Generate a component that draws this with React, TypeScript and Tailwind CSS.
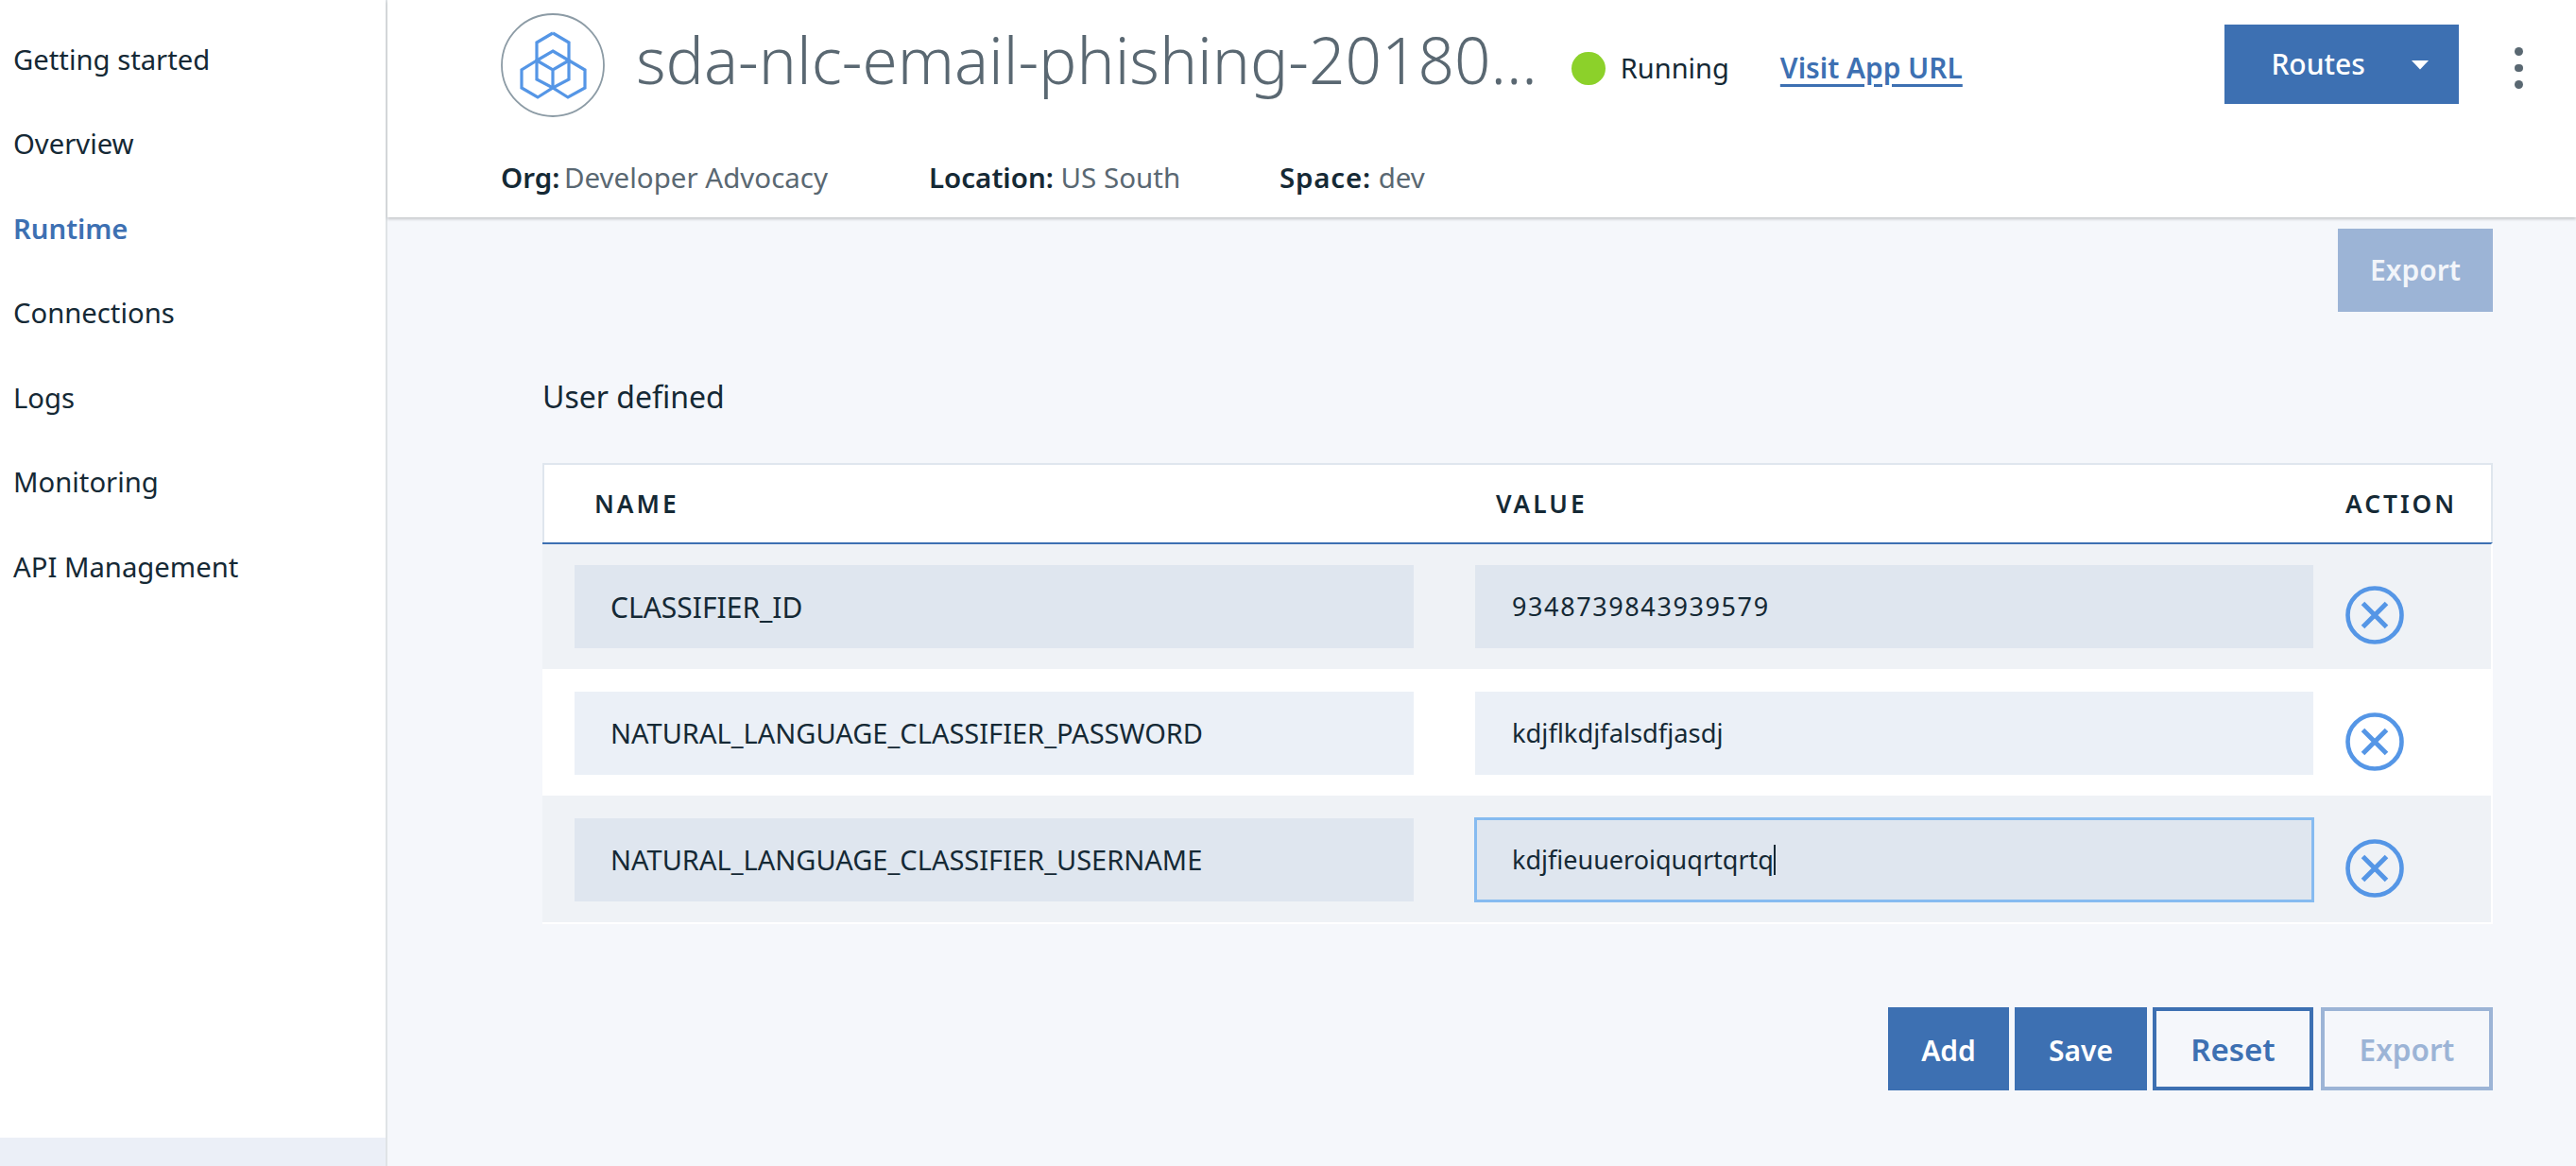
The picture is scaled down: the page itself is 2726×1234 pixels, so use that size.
const font = "font-['Noto_Sans','Open_Sans',sans-serif]";

const navItems = ["Getting started", "Overview", "Runtime", "Connections", "Logs", "Monitoring", "API Management"];
const rows = [
  { name: "CLASSIFIER_ID", value: "9348739843939579", striped: true, rowClass: "h-[132px] pt-[22px]", nameClass: "text-[30px]", valueClass: "text-[27px] tracking-[1.6px]" },
  { name: "NATURAL_LANGUAGE_CLASSIFIER_PASSWORD", value: "kdjflkdjfalsdfjasdj", striped: false, rowClass: "h-[134px] pt-[24px]", nameClass: "text-[29px]", valueClass: "text-[27.3px]" },
  { name: "NATURAL_LANGUAGE_CLASSIFIER_USERNAME", value: "kdjfieuueroiquqrtqrtq", striped: true, focus: true, rowClass: "h-[134px] pt-[24px]", nameClass: "text-[29px]", valueClass: "text-[27px]" },
];

function Logo() {
  return (
    <svg viewBox="530 14 110 110" className="w-[110px] h-[110px] shrink-0" fill="none">
      <circle cx="585" cy="69" r="54" stroke="#8c9ba5" strokeWidth="1.8" />
      <g stroke="#5596e6" strokeWidth="3.2" strokeLinejoin="miter">
        <path d="M585 35 L602 45 V64 M568 64 V45 L585 35" />
        <path d="M585 54 L602 64 V84 L585 93 L568 84 V64 Z" />
        <path d="M568 64 L585 74 L602 64 M585 74 V93" />
        <path d="M568 64 L552 74 V93 L569 103 L585 93 L601 103 L619 93 V74 L602 64" />
      </g>
    </svg>
  );
}

function RemoveIcon() {
  return (
    <svg viewBox="0 0 62 62" className="w-[62px] h-[62px] shrink-0 mt-[22px]" fill="none" stroke="#5596e6">
      <circle cx="31" cy="31" r="28.5" strokeWidth="4.6" />
      <path d="M18.5 18.5 L43.5 43.5 M43.5 18.5 L18.5 43.5" strokeWidth="5" />
    </svg>
  );
}

function Field({ text, className, striped, focus }: { text: string; className: string; striped: boolean; focus?: boolean }) {
  return (
    <div
      className={`${className} h-[88px] flex items-center text-[#152935] ${
        striped ? "bg-[#dfe6ef]" : "bg-[#ebf0f7]"
      } ${focus ? "outline-[3px] outline-offset-[-2px] outline-[#86bbf0]" : ""}`}
    >
      <span>{text}</span>
      {focus && <span className="w-[2px] h-[32px] bg-[#152935]" />}
    </div>
  );
}

export default function App() {
  return (
    <div className={`${font} w-[2726px] h-[1234px] overflow-hidden flex bg-[#f5f7fb] text-[#152935]`}>
      <aside className="w-[410px] h-full shrink-0 bg-white border-r-2 border-[#dfe3e6] flex flex-col">
        <nav className="pt-[19px] pl-[14px] flex-1 flex flex-col">
          {navItems.map((item) => (
            <div
              key={item}
              className={`h-[89.5px] flex items-center text-[29.25px] ${
                item === "Runtime" ? "font-semibold text-[#3d70b2]" : ""
              }`}
            >
              {item}
            </div>
          ))}
        </nav>
        <div className="h-[30px] bg-[#ebeff7]" />
      </aside>

      <main className="flex-1 flex flex-col min-w-0">
        <header className="h-[230px] shrink-0 bg-white shadow-[0_2px_3px_rgba(0,0,0,0.2)] relative pl-[120px] pr-[56px] flex flex-col">
          <div className="h-[138px] pt-[14px] flex items-start">
            <Logo />
            <h1 className="ml-[33px] mt-[-5px] h-[110px] flex items-center text-[67.4px] font-light text-[#5a6872] whitespace-nowrap">
              sda-nlc-email-phishing-20180...
            </h1>
            <div className="ml-[36px] h-[116px] flex items-center">
              <span className="w-[36px] h-[35px] rounded-full bg-[#8cd12a]" />
              <span className="ml-[16px] text-[29px]">Running</span>
              <a className="ml-[54px] text-[29.8px] font-semibold text-[#3d70b2] underline decoration-[3px] underline-offset-[6px]">
                Visit App URL
              </a>
            </div>
            <div className="ml-auto mt-[12px] w-[248px] h-[84px] bg-[#3d70b2] text-white flex items-center pl-[49px] pb-[2px] text-[30px] font-medium">
              <span>Routes</span>
              <svg viewBox="0 0 18 10" className="w-[18px] h-[10px] ml-[49px] mt-[4px]" fill="#ffffff">
                <path d="M0 0 H18 L9 9.5 Z" />
              </svg>
            </div>
            <div className="ml-[59px] mt-[36px] flex flex-col gap-[9px]">
              <span className="w-[8.6px] h-[8.6px] rounded-full bg-[#5a6872]" />
              <span className="w-[8.6px] h-[8.6px] rounded-full bg-[#5a6872]" />
              <span className="w-[8.6px] h-[8.6px] rounded-full bg-[#5a6872]" />
            </div>
          </div>
          <div className="flex items-center h-[40px] mt-[30px] text-[29.5px] whitespace-nowrap">
            <div className="w-[453px]"><b className="font-semibold">Org:</b> <span className="text-[#5a6872] ml-[-3px]">Developer Advocacy</span></div>
            <div className="w-[371px]"><b className="font-semibold">Location:</b> <span className="text-[#5a6872]">US South</span></div>
            <div><b className="font-semibold tracking-[0.8px]">Space:</b> <span className="text-[#5a6872]">dev</span></div>
          </div>
        </header>

        <section className="flex-1 pl-[164px] pr-[88px] pt-[12px]">
          <div className="flex justify-end">
            <button className="w-[164px] h-[88px] pb-[2px] bg-[#9cb4d6] text-[#f2f5fa] text-[30px] font-semibold">Export</button>
          </div>
          <h2 className="h-[44px] mt-[68px] mb-[48px] flex items-center text-[32px]">User defined</h2>

          <div>
            <div className="h-[84px] pt-[2px] bg-white border-2 border-b-0 border-[#dfe6ee] flex items-center text-[26.3px] font-semibold tracking-[3px]">
              <span className="ml-[53px] w-[954px]">NAME</span>
              <span className="w-[899px]">VALUE</span>
              <span>ACTION</span>
            </div>
            <div className="border-t-2 border-[#3d70b2] border-r-2 border-b-2 border-r-white border-b-white">
              {rows.map((row) => (
                <div
                  key={row.name}
                  className={`${row.rowClass} flex items-start pl-[34px] ${row.striped ? "bg-[#eff2f6]" : "bg-white"}`}
                >
                  <Field text={row.name} className={`${row.nameClass} w-[888px] pl-[38px]`} striped={row.striped} />
                  <div className="w-[65px]" />
                  <Field text={row.value} className={`${row.valueClass} w-[887px] pl-[39px]`} striped={row.striped} focus={row.focus} />
                  <div className="w-[34px]" />
                  <RemoveIcon />
                </div>
              ))}
            </div>
          </div>

          <div className="mt-[88px] flex justify-end text-[30px] font-semibold">
            <button className="w-[128px] h-[88px] pt-[2px] bg-[#3d70b2] text-white">Add</button>
            <button className="ml-[6px] w-[140px] h-[88px] pt-[2px] bg-[#3d70b2] text-white">Save</button>
            <button className="ml-[6px] w-[170px] h-[88px] pt-[2px] border-4 border-[#3d70b2] text-[#3d70b2] text-[33px]">Reset</button>
            <button className="ml-[8px] w-[182px] h-[88px] pt-[2px] border-4 border-[#9cb4d6] text-[#9cb4d6] text-[31.5px]">Export</button>
          </div>
        </section>
      </main>
    </div>
  );
}
